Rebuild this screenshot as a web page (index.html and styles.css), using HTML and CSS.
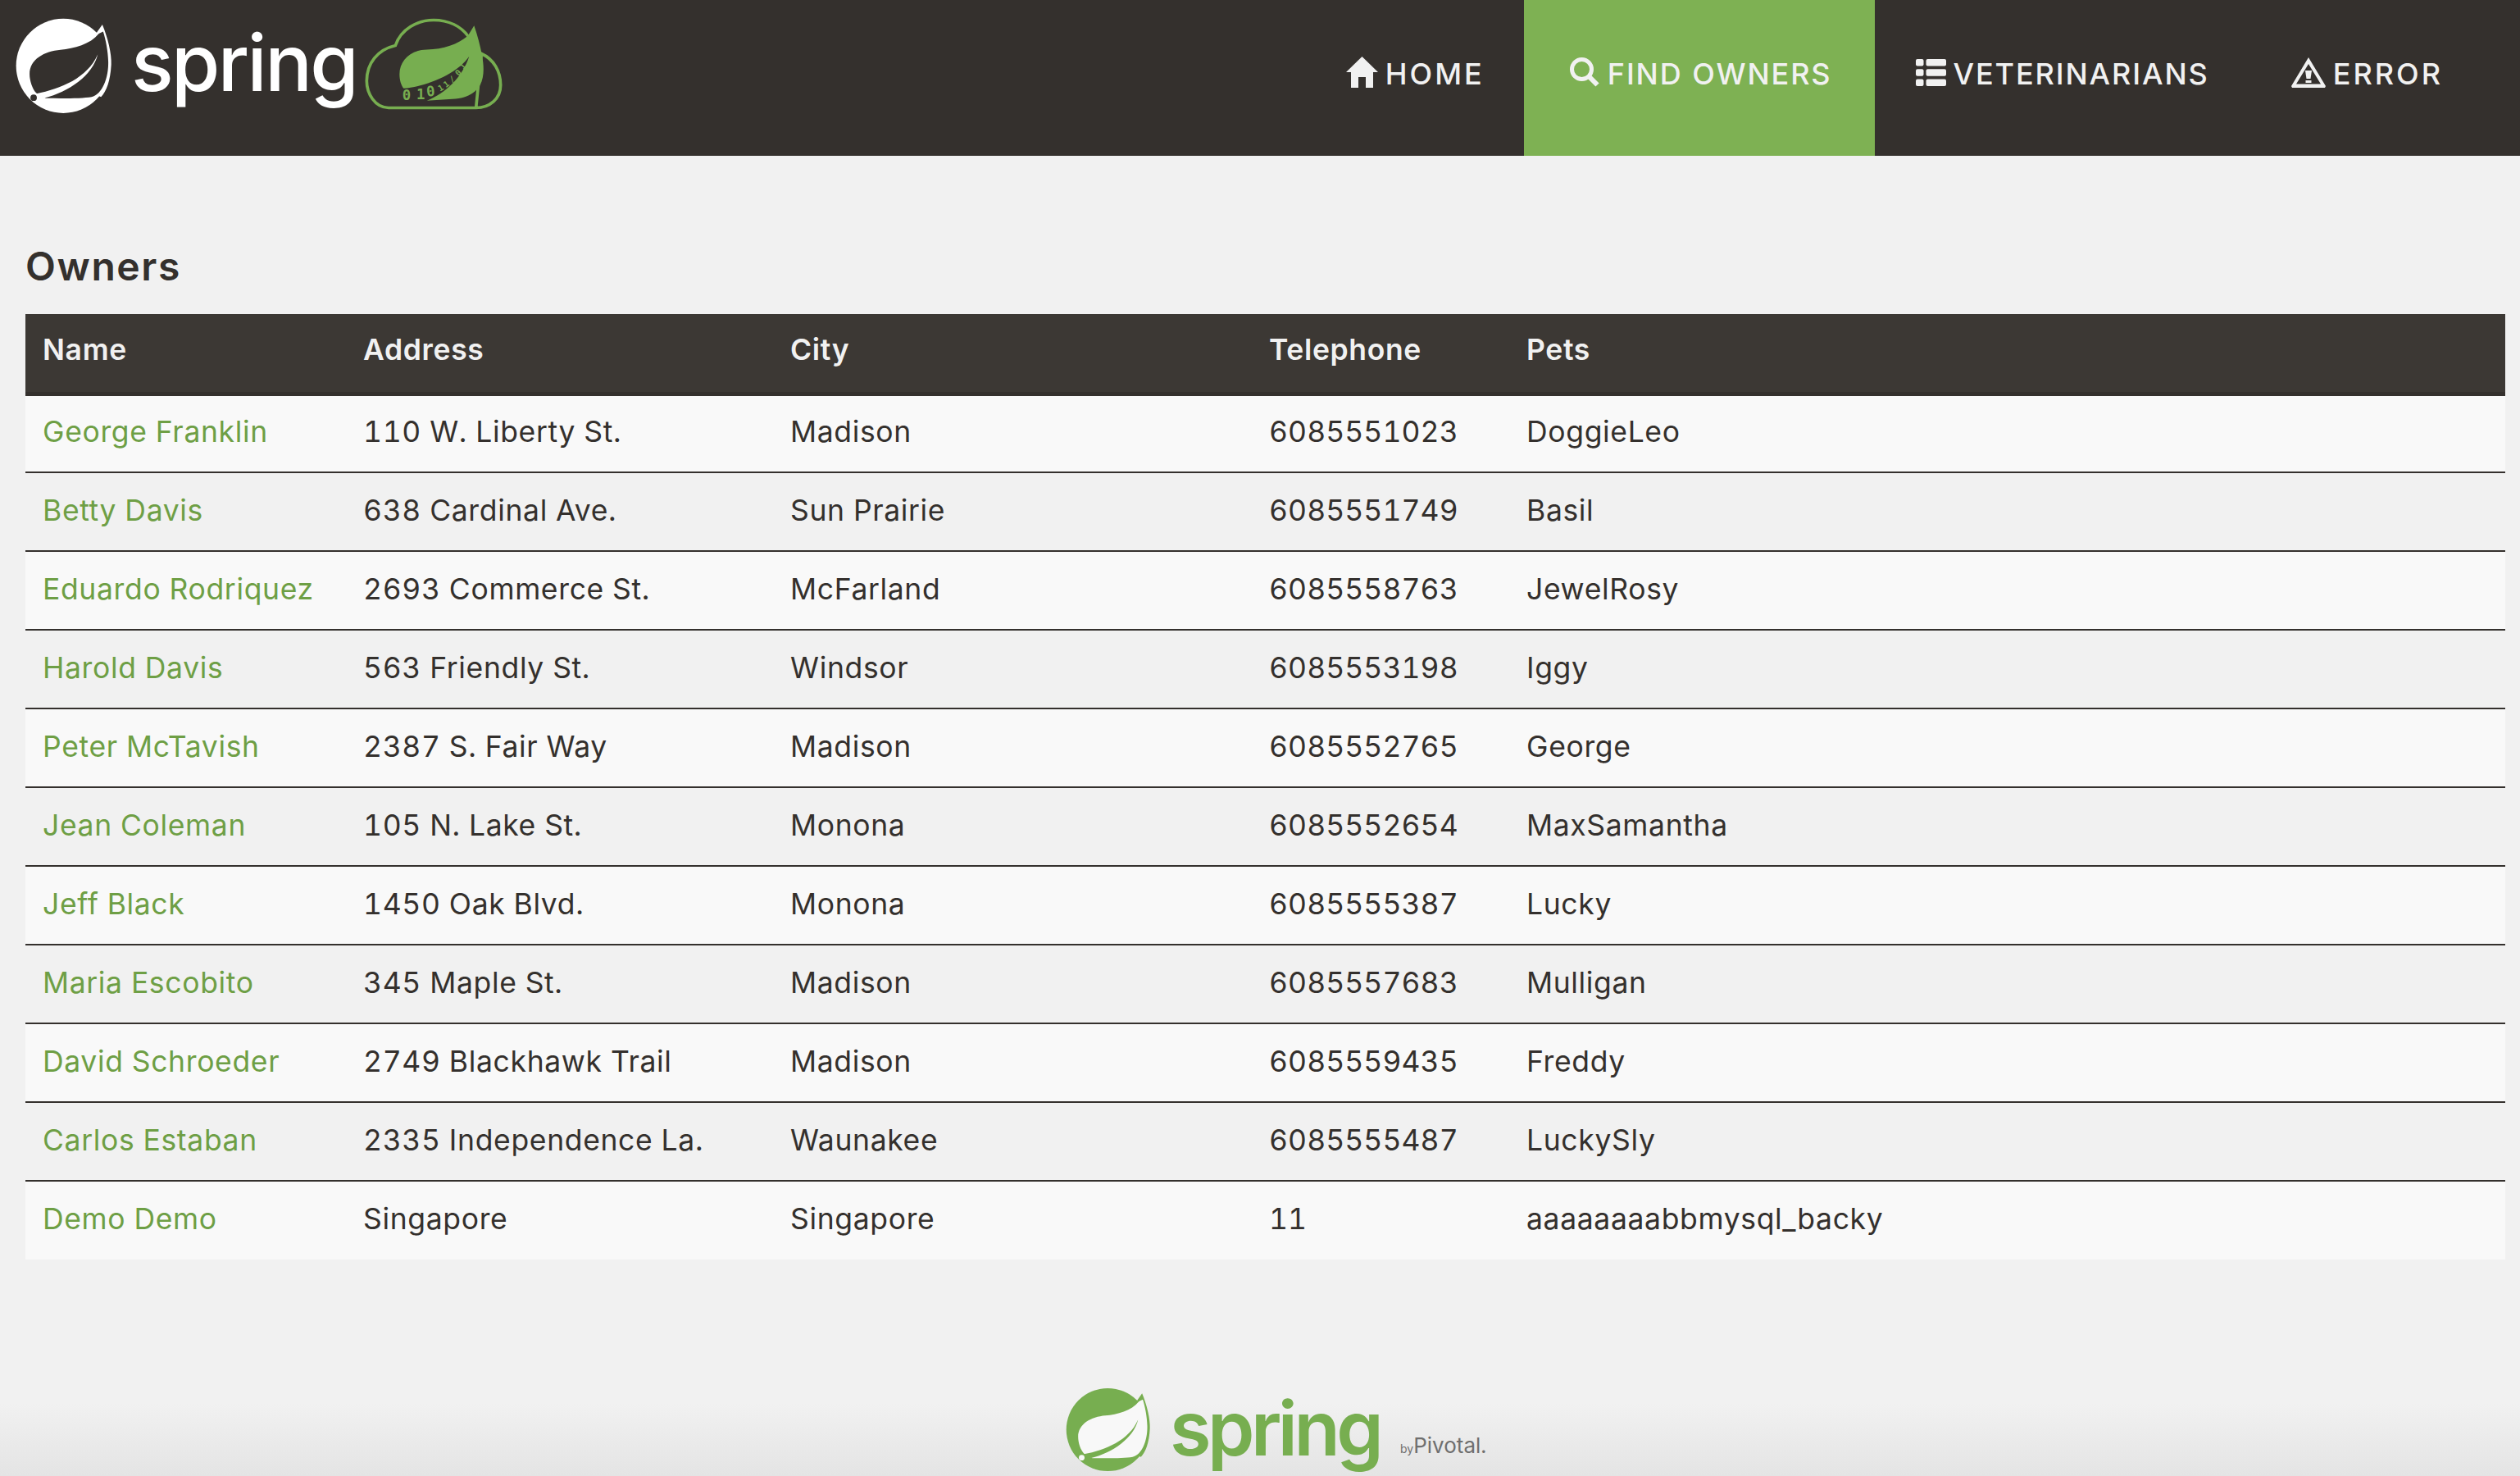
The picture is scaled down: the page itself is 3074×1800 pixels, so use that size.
FILE: index.html
```html
<!DOCTYPE html>
<html lang="en">
<head>
    <meta charset="UTF-8">
    <meta name="viewport" content="width=device-width, initial-scale=1.0">
    <title>Owners</title>
    <link rel="stylesheet" href="styles.css">
</head>
<body>
    <!-- shared leaf mark, recoloured through css variables -->
    <svg class="defs" aria-hidden="true">
        <symbol id="leafMark" viewBox="50 40 365 360">
            <circle class="leaf-outer" cx="230" cy="215" r="175"/>
            <path class="leaf-outer" d="M355 90 L375 62 C395 110 410 170 408 210 C405 270 390 310 370 330 L300 300 Z"/>
            <path class="leaf-inner" d="M362 95 C330 135 270 150 220 155 C160 160 105 190 105 245 C105 270 115 300 130 316 L165 335 C230 336 300 336 335 330 C375 320 398 260 397 200 C396 160 388 120 378 88 Z"/>
            <path class="leaf-outer" d="M130 318 C220 300 320 260 358 172 C340 250 250 312 160 334 Z"/>
            <circle class="leaf-inner" cx="120" cy="333" r="12"/>
        </symbol>
    </svg>

    <header class="navbar">
        <div class="brand">
            <svg class="brand-leaf"><use href="#leafMark"/></svg>
            <span class="brand-name">spring</span>
            <svg class="brand-cloud" viewBox="40 35 510 335">
                <path class="cloud-line" d="M130 363 C80 363 50 310 50 265 C50 200 90 150 155 135 C175 75 235 42 295 42 C350 42 395 65 422 102 M470 165 C515 185 540 230 540 280 C540 330 500 363 450 363 Z M450 363 L130 363"/>
                <path class="cloud-leaf" d="M443 62 C455 95 465 135 472 170 C480 215 480 250 465 280 C445 315 405 328 375 330 L270 337 C340 310 400 250 425 175 C380 240 270 285 185 292 C175 280 170 260 170 240 C170 190 210 150 270 150 C330 150 385 130 420 100 Z"/>
                <text class="cloud-bits" x="180 232 270" y="335 331 322" rotate="0 0 -6">010</text>
                <text class="cloud-bits-small" x="318 340 362 386 404" y="304 290 272 248 224" rotate="-30 -35 -40 -45 -50">11/01</text>
            </svg>
        </div>

        <nav class="menu">
            <a class="menu-item menu-home" href="#">
                <svg class="icon icon-home" viewBox="0 0 39 38"><path d="M19.5 0 L39 19 H33 V38 H24 V25 H15 V38 H6 V19 H0 Z"/></svg>
                <span>HOME</span>
            </a>
            <a class="menu-item menu-owners active" href="#">
                <svg class="icon icon-search" viewBox="0 0 37 37"><circle class="icon-ring" cx="14.5" cy="14.5" r="12"/><path class="icon-handle" d="M23.5 23.5 L33.5 33.5"/></svg>
                <span>FIND OWNERS</span>
            </a>
            <a class="menu-item menu-vets" href="#">
                <svg class="icon icon-list" viewBox="0 0 37 33">
                    <rect width="9.5" height="8.5" rx="2"/><rect x="12.5" width="24.5" height="8.5" rx="2"/>
                    <rect y="12.3" width="9.5" height="8.5" rx="2"/><rect x="12.5" y="12.3" width="24.5" height="8.5" rx="2"/>
                    <rect y="24.5" width="9.5" height="8.5" rx="2"/><rect x="12.5" y="24.5" width="24.5" height="8.5" rx="2"/>
                </svg>
                <span>VETERINARIANS</span>
            </a>
            <a class="menu-item menu-error" href="#">
                <svg class="icon icon-warning" viewBox="0 0 42 37"><path fill-rule="evenodd" d="M21 0 L42 35 L41 37 H1 L0 35 Z M21 8 L6 32.5 H36 Z M17 16 H25 L23.5 26 H18.5 Z M17.5 28 H24.5 V31 H17.5 Z"/></svg>
                <span>ERROR</span>
            </a>
        </nav>
    </header>

    <main class="content">
        <h2 class="page-title">Owners</h2>
        <table class="owners">
            <colgroup>
                <col class="col-name">
                <col class="col-address">
                <col class="col-city">
                <col class="col-phone">
                <col>
            </colgroup>
            <thead>
                <tr><th>Name</th><th>Address</th><th>City</th><th>Telephone</th><th>Pets</th></tr>
            </thead>
            <tbody>
                <tr><td><a href="#">George Franklin</a></td><td>110 W. Liberty St.</td><td>Madison</td><td class="phone">6085551023</td><td>DoggieLeo</td></tr>
                <tr><td><a href="#">Betty Davis</a></td><td>638 Cardinal Ave.</td><td>Sun Prairie</td><td class="phone">6085551749</td><td>Basil</td></tr>
                <tr><td><a href="#">Eduardo Rodriquez</a></td><td>2693 Commerce St.</td><td>McFarland</td><td class="phone">6085558763</td><td>JewelRosy</td></tr>
                <tr><td><a href="#">Harold Davis</a></td><td>563 Friendly St.</td><td>Windsor</td><td class="phone">6085553198</td><td>Iggy</td></tr>
                <tr><td><a href="#">Peter McTavish</a></td><td>2387 S. Fair Way</td><td>Madison</td><td class="phone">6085552765</td><td>George</td></tr>
                <tr><td><a href="#">Jean Coleman</a></td><td>105 N. Lake St.</td><td>Monona</td><td class="phone">6085552654</td><td>MaxSamantha</td></tr>
                <tr><td><a href="#">Jeff Black</a></td><td>1450 Oak Blvd.</td><td>Monona</td><td class="phone">6085555387</td><td>Lucky</td></tr>
                <tr><td><a href="#">Maria Escobito</a></td><td>345 Maple St.</td><td>Madison</td><td class="phone">6085557683</td><td>Mulligan</td></tr>
                <tr><td><a href="#">David Schroeder</a></td><td>2749 Blackhawk Trail</td><td>Madison</td><td class="phone">6085559435</td><td>Freddy</td></tr>
                <tr><td><a href="#">Carlos Estaban</a></td><td>2335 Independence La.</td><td>Waunakee</td><td class="phone">6085555487</td><td>LuckySly</td></tr>
                <tr><td><a href="#">Demo Demo</a></td><td>Singapore</td><td>Singapore</td><td class="phone">11</td><td>aaaaaaaabbmysql_backy</td></tr>
            </tbody>
        </table>
    </main>

    <footer class="page-footer">
        <svg class="footer-leaf"><use href="#leafMark"/></svg>
        <span class="footer-name">spring</span>
        <span class="footer-by"><small>by</small>Pivotal.</span>
    </footer>
</body>
</html>
```

FILE: styles.css
```css
html, body {
    height: 100%;
}
body {
    margin: 0;
    height: 1800px;
    overflow: hidden;
    display: flex;
    flex-direction: column;
    font-family: Inter, "Open Sans", sans-serif;
    font-size: 35.5px;
    font-variant-numeric: tabular-nums;
    letter-spacing: 0.65px;
    color: #34302d;
    background-color: #f1f1f1;
}
a {
    text-decoration: none;
}
.defs {
    display: none;
}
.leaf-outer {
    fill: var(--leaf-outer);
}
.leaf-inner {
    fill: var(--leaf-inner);
}

/* top bar */
.navbar {
    display: flex;
    justify-content: space-between;
    flex: none;
    height: 190px;
    padding-right: 42px;
    background-color: #34302d;
    --leaf-outer: #ffffff;
    --leaf-inner: #34302d;
}
.brand {
    display: flex;
    align-items: flex-start;
    padding: 22px 0 0 18px;
}
.brand-leaf {
    width: 120px;
    height: 120px;
}
.brand-name {
    width: 284px;
    margin: -6px 0 0 22px;
    font-size: 96px;
    font-weight: 500;
    line-height: 120px;
    letter-spacing: -2.6px;
    color: #ffffff;
}
.brand-cloud {
    width: 170px;
    height: 112px;
}
.cloud-line {
    fill: none;
    stroke: #77ae50;
    stroke-width: 11;
}
.cloud-leaf {
    fill: #77ae50;
}
.cloud-bits, .cloud-bits-small {
    font-family: "DejaVu Sans Mono", monospace;
    font-weight: 700;
    letter-spacing: 0;
    fill: #77ae50;
}
.cloud-bits {
    font-size: 52px;
}
.cloud-bits-small {
    font-size: 30px;
}
.menu {
    display: flex;
}
.menu-item {
    display: flex;
    align-items: center;
    gap: 9px;
    padding: 0 52px 10px;
    font-size: 36px;
    font-weight: 500;
    letter-spacing: 1.9px;
    color: #f1f1f1;
}
.menu-home {
    padding-right: 48px;
    letter-spacing: 3px;
}
.menu-owners {
    padding-left: 56px;
}
.menu-vets {
    padding-left: 50px;
}
.menu-error {
    padding-left: 48px;
    letter-spacing: 3px;
}
.menu-item.active {
    background-color: #7eb153;
}
.icon {
    fill: #f1f1f1;
}
.icon-home {
    width: 39px;
    height: 38px;
    margin-top: -4px;
}
.icon-search {
    width: 37px;
    height: 37px;
    margin-top: -4px;
}
.icon-ring, .icon-handle {
    fill: none;
    stroke: #f1f1f1;
    stroke-width: 5;
}
.icon-handle {
    stroke-width: 6;
}
.icon-list {
    width: 37px;
    height: 33px;
    margin-top: -3px;
}
.icon-warning {
    width: 42px;
    height: 37px;
    margin-top: -4px;
}

/* owners table */
.content {
    flex: 1;
    padding: 0 18px 0 31px;
}
.page-title {
    margin: 0;
    padding-top: 106px;
    height: 87px;
    font-size: 48px;
    font-weight: 600;
    line-height: 58px;
    letter-spacing: 1.6px;
}
.owners {
    width: 100%;
    table-layout: fixed;
    border-collapse: collapse;
}
.col-name {
    width: 391px;
}
.col-address {
    width: 521px;
}
.col-city {
    width: 584px;
}
.col-phone {
    width: 314px;
}
.owners th {
    height: 97px;
    box-sizing: border-box;
    padding: 0 21px 8px;
    text-align: left;
    font-weight: 600;
    color: #f1f1f1;
    background-color: #3c3834;
    border-bottom: 5px solid #34302d;
}
.owners td {
    height: 96px;
    padding: 0 21px 4px;
    box-sizing: border-box;
    border-top: 2px solid #34302d;
}
.owners td.phone {
    letter-spacing: 0.05px;
}
.owners tbody tr:first-child td {
    border-top: 0;
}
.owners tbody tr:nth-child(odd) {
    background-color: #f9f9f9;
}
.owners a {
    color: #6e9f45;
}

/* footer */
.page-footer {
    display: flex;
    flex: none;
    align-items: flex-start;
    height: 110px;
    padding: 3px 0 0 1299px;
    box-sizing: border-box;
    background: linear-gradient(#f1f1f1 20%, #e4e4e4);
    --leaf-outer: #77ae50;
    --leaf-inner: #f8f8f8;
}
.footer-leaf {
    width: 106px;
    height: 104px;
}
.footer-name {
    width: 281px;
    margin: -6px 0 0 22px;
    font-size: 92px;
    font-weight: 600;
    line-height: 110px;
    letter-spacing: -4.5px;
    color: #77ae50;
}
.footer-by {
    margin: 54px 0 0 0;
    font-size: 26px;
    letter-spacing: 0;
    color: #6f6f6f;
}
.footer-by small {
    font-size: 14px;
}
```
